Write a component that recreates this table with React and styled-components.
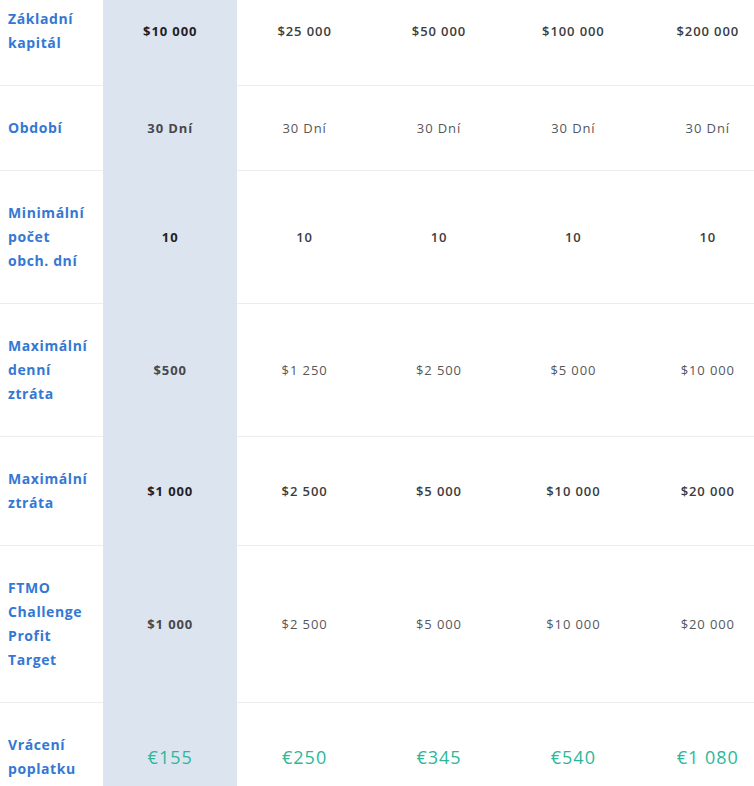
import React from "react";
import styled, { createGlobalStyle } from "styled-components";

const Global = createGlobalStyle`
  html, body { margin: 0; padding: 0; background: #fff; overflow: hidden; }
  body { font-family: "Open Sans", "Liberation Sans", sans-serif; }
`;

const Wrap = styled.div`
  width: 754px;
  height: 786px;
  overflow: hidden;
`;

const Table = styled.table`
  margin-top: -23px;
  width: 775px;
  table-layout: fixed;
  border-collapse: collapse;
  border-spacing: 0;
`;

const LabelCol = styled.col`
  width: 103px;
`;
const ValueCol = styled.col`
  width: 134.4px;
`;

const Row = styled.tr``;

const Label = styled.th`
  padding: 30px 8px 30px 8px;
  text-align: left;
  vertical-align: middle;
  color: #3478d4;
  font-family: "Open Sans", sans-serif;
  font-weight: 700;
  font-size: 14px;
  line-height: 24px;
  letter-spacing: 0.6px;
  border-bottom: 1px solid #ededed;
`;

const weight = (p) => {
  if (p.$big) return 500;
  if (p.$hl) return 700;
  if (p.$strong) return 600;
  return 400;
};

const color = (p) => {
  if (p.$big) return "#2db79a";
  if (p.$strong) return p.$hl ? "#1f2125" : "#3a3c40";
  return p.$hl ? "#46484d" : "#55575b";
};

const Cell = styled.td`
  padding: 30px 0;
  text-align: center;
  vertical-align: middle;
  font-family: "Open Sans", sans-serif;
  font-size: ${(p) => (p.$big ? "18px" : "13px")};
  line-height: 24px;
  letter-spacing: ${(p) => (p.$big ? "1px" : "0.9px")};
  font-weight: ${weight};
  color: ${color};
  background: ${(p) => (p.$hl ? "#dce4ef" : "transparent")};
  border-bottom: 1px solid ${(p) => (p.$hl ? "#dce4ef" : "#ededed")};
`;

const rows = [
  { label: ["Základní", "kapitál"], values: ["$10 000", "$25 000", "$50 000", "$100 000", "$200 000"], strong: true },
  { label: ["Období"], values: ["30 Dní", "30 Dní", "30 Dní", "30 Dní", "30 Dní"] },
  { label: ["Minimální", "počet", "obch. dní"], values: ["10", "10", "10", "10", "10"], strong: true },
  { label: ["Maximální", "denní", "ztráta"], values: ["$500", "$1 250", "$2 500", "$5 000", "$10 000"] },
  { label: ["Maximální", "ztráta"], values: ["$1 000", "$2 500", "$5 000", "$10 000", "$20 000"], strong: true },
  { label: ["FTMO", "Challenge", "Profit", "Target"], values: ["$1 000", "$2 500", "$5 000", "$10 000", "$20 000"] },
  { label: ["Vrácení", "poplatku"], values: ["€155", "€250", "€345", "€540", "€1 080"], big: true },
];

export default function App() {
  return (
    <Wrap>
      <Global />
      <Table>
        <colgroup>
          <LabelCol />
          <ValueCol />
          <ValueCol />
          <ValueCol />
          <ValueCol />
          <ValueCol />
        </colgroup>
        <tbody>
          {rows.map((r, i) => (
            <Row key={i}>
              <Label>
                {r.label.map((l, j) => (
                  <React.Fragment key={j}>
                    {j > 0 && <br />}
                    {l}
                  </React.Fragment>
                ))}
              </Label>
              {r.values.map((v, j) => (
                <Cell key={j} $hl={j === 0} $strong={r.strong} $big={r.big}>
                  {v}
                </Cell>
              ))}
            </Row>
          ))}
        </tbody>
      </Table>
    </Wrap>
  );
}
